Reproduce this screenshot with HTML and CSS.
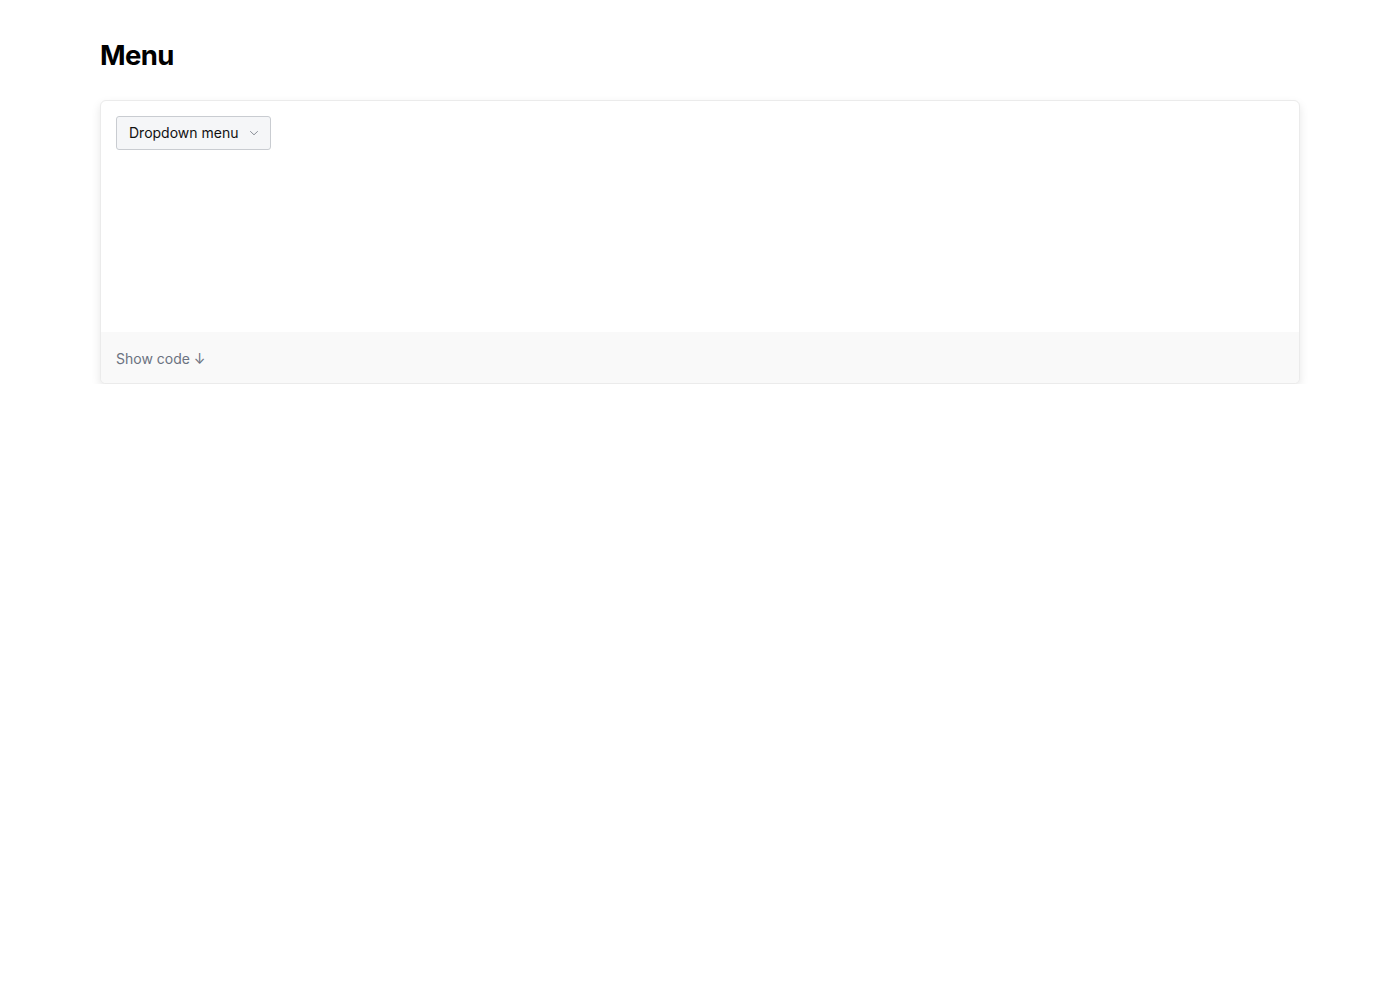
FILE: index.html
```html
<!DOCTYPE html>
<html lang="en">
<head>
<meta charset="utf-8">
<title>Menu</title>
<link rel="stylesheet" href="styles.css">
</head>
<body>
<main class="page">
  <h1 class="title">Menu</h1>
  <section class="card">
    <div class="preview">
      <button class="dropdown-btn" type="button">
        <span>Dropdown menu</span>
        <svg class="chevron" width="10" height="10" viewBox="0 0 10 10" aria-hidden="true">
          <path d="M1.5 3.5 L5 6.8 L8.5 3.5" fill="none" stroke="#8a8f98" stroke-width="1" stroke-linecap="round" stroke-linejoin="round"/>
        </svg>
      </button>
    </div>
    <div class="footer">
      <span class="show-code">Show code ↓</span>
    </div>
  </section>
</main>
</body>
</html>
```

FILE: styles.css
```css
* { box-sizing: border-box; }
html, body { margin: 0; padding: 0; background: #ffffff; }
body {
  font-family: Inter, "Noto Sans", "Liberation Sans", sans-serif;
  color: #111111;
}
.page {
  padding: 37px 100px 0;
}
.title {
  margin: 0 0 27px;
  font-size: 27.5px;
  line-height: 36px;
  font-weight: 700;
  color: #000000;
  letter-spacing: -0.6px;
}
.card {
  border: 1px solid #ebebeb;
  border-radius: 6px;
  box-shadow: 0 4px 10px rgba(0,0,0,0.1);
  overflow: hidden;
  background: #ffffff;
}
.preview {
  height: 231px;
  padding: 15px;
}
.dropdown-btn {
  display: inline-flex;
  align-items: center;
  gap: 11px;
  height: 34px;
  padding: 0 11px 1px 12px;
  border: 1px solid #c9ccd1;
  border-radius: 3px;
  background: #f5f6f8;
  font-family: inherit;
  font-size: 14px;
  color: #111111;
  cursor: pointer;
}
.chevron { display: block; }
.footer {
  height: 51px;
  background: #f9f9f9;
  display: flex;
  align-items: center;
  padding: 2px 15px 0;
}
.show-code {
  font-size: 14px;
  color: #6b7280;
}
```
